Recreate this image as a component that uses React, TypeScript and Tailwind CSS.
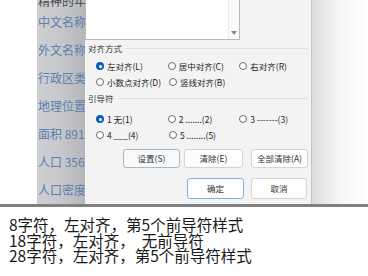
import React from "react";

const cjk = { fontFamily: '"Noto Sans CJK SC", "Noto Sans", sans-serif' };

function Radio({ checked }: { checked?: boolean }) {
  return checked ? (
    <span className="inline-flex h-[8px] w-[8px] shrink-0 items-center justify-center rounded-full bg-[#0a5fb4]">
      <span className="h-[3px] w-[3px] rounded-full bg-white" />
    </span>
  ) : (
    <span className="inline-block h-[8px] w-[8px] shrink-0 rounded-full border border-[#6b6b6b] bg-white" />
  );
}

function Opt({ label, checked, w = "w-[73px]" }: { label: string; checked?: boolean; w?: string }) {
  return (
    <div className={`flex h-[16px] items-center gap-[3px] ${w}`}>
      <Radio checked={checked} />
      <span className="whitespace-nowrap text-[8.5px] leading-[12px] text-[#222]">{label}</span>
    </div>
  );
}

function Btn({ label, cls }: { label: string; cls: string }) {
  return (
    <div
      className={`flex items-center justify-center rounded-[3px] border text-[8.5px] text-[#333] ${cls}`}
    >
      {label}
    </div>
  );
}

function GroupLabel({ label, cls }: { label: string; cls: string }) {
  return (
    <div className={`flex h-[12px] items-center gap-[4px] pl-[3px] pr-[4px] ${cls}`}>
      <span className="whitespace-nowrap text-[8.5px] leading-[12px] text-[#333]">{label}</span>
      <div className="h-px flex-1 bg-[#dedede]" />
    </div>
  );
}

export default function App() {
  const docRows = ["中文名称：", "外文名称：", "行政区类别", "地理位置：", "面积 891.8", "人口 356 万", "人口密度："];
  return (
    <div className="h-[276px] w-[368px] overflow-hidden bg-white" style={cjk}>
      <div className="flex h-[204px]">
        <div className="w-[37px] bg-white" />
        <div className="relative w-[48px] overflow-hidden bg-gradient-to-r from-[#cdcfd2] via-[#c6c8cb] to-[#b4b6b9]">
          <div className="-mt-[6px] whitespace-nowrap pl-[1px] text-[12px] leading-[14px] text-[#4a4a4a]">
            精神的年龄
          </div>
          {docRows.map((r) => (
            <div
              key={r}
              className="flex h-[28px] items-center whitespace-nowrap pl-[1px] text-[12px] text-[#5a80ad]"
            >
              {r}
            </div>
          ))}
        </div>
        <div className="flex w-[227px] flex-col border-r border-[#c4c4c4] bg-[#f3f3f3]">
          <div className="flex h-[40px] w-[155px] border-b border-l border-r border-[#b9b9b9] bg-white">
            <div className="flex-1" />
            <div className="flex w-[11px] flex-col items-center justify-end border-l border-[#ececec] bg-[#fafafa] pb-[4px]">
              <svg width="6" height="4" viewBox="0 0 6 4">
                <path d="M0 0 H6 L3 4 Z" fill="#8a8a8a" />
              </svg>
            </div>
          </div>
          <GroupLabel label="对齐方式" cls="mt-[2px]" />
          <div className="mt-[4px] flex pl-[11px]">
            <Opt label="左对齐(L)" checked />
            <Opt label="居中对齐(C)" />
            <Opt label="右对齐(R)" />
          </div>
          <div className="flex pl-[11px]">
            <Opt label="小数点对齐(D)" />
            <Opt label="竖线对齐(B)" />
          </div>
          <GroupLabel label="引导符" cls="mt-[2px]" />
          <div className="mt-[7px] flex pl-[11px]">
            <Opt label="1 无(1)" checked />
            <Opt label="2 .......(2)" />
            <Opt label="3 -------(3)" />
          </div>
          <div className="flex pl-[11px]">
            <Opt label="4 ___(4)" />
            <Opt label="5 ........(5)" />
          </div>
          <div className="mt-[6px] flex pl-[38px]">
            <Btn label="设置(S)" cls="h-[19px] w-[57px] border-[#a9b8c6] bg-[#f7f9fb]" />
            <Btn label="清除(E)" cls="ml-[4px] h-[19px] w-[59px] border-[#d3d3d3] bg-[#fdfdfd]" />
            <Btn label="全部清除(A)" cls="ml-[8px] h-[19px] w-[57px] border-[#d3d3d3] bg-[#fdfdfd]" />
          </div>
          <div className="mt-[10px] flex pl-[102px]">
            <Btn label="确定" cls="h-[21px] w-[57px] border-[#7fb2d6] bg-[#fbfdff]" />
            <Btn label="取消" cls="ml-[7px] h-[21px] w-[56px] border-[#d3d3d3] bg-[#fdfdfd]" />
          </div>
        </div>
        <div className="flex-1 bg-gradient-to-r from-[#dcdcdc] via-[#f6f6f6] to-white" />
      </div>
      <div className="h-[3px] bg-[#808080]" />
      <div className="pl-[9px] pt-[10px] text-[15.5px] leading-[15.5px] text-[#1a1a1a]">
        <div className="whitespace-nowrap">8字符，左对齐，第5个前导符样式</div>
        <div className="whitespace-nowrap">
          18字符，左对齐，<span className="ml-[7px]">无前导符</span>
        </div>
        <div className="whitespace-nowrap">28字符，左对齐，第5个前导符样式</div>
      </div>
    </div>
  );
}
